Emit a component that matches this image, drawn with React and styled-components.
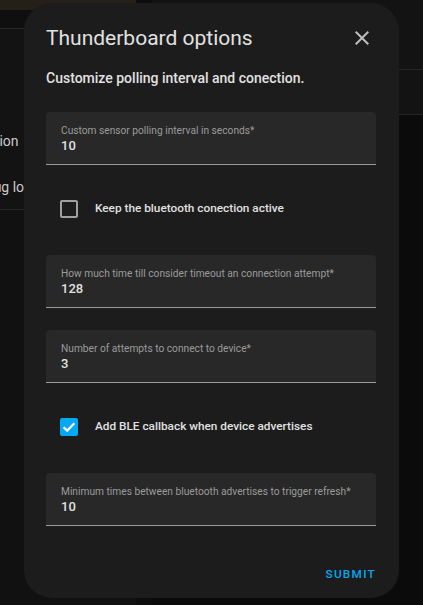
import React, { useState } from "react";
import styled, { createGlobalStyle } from "styled-components";

const GlobalStyle = createGlobalStyle`
  html, body {
    margin: 0;
    padding: 0;
    background: #0b0b0b;
    font-family: Roboto, "Noto Sans", sans-serif;
    -webkit-font-smoothing: antialiased;
  }
  #root {
    width: 423px;
    height: 605px;
    overflow: hidden;
    position: relative;
  }
`;

const fields = [
  { key: "interval", label: "Custom sensor polling interval in seconds*", value: "10" },
  { key: "keep", check: true, label: "Keep the bluetooth conection active" },
  { key: "timeout", label: "How much time till consider timeout an connection attempt*", value: "128" },
  { key: "attempts", label: "Number of attempts to connect to device*", value: "3" },
  { key: "ble", check: true, label: "Add BLE callback when device advertises" },
  { key: "refresh", label: "Minimum times between bluetooth advertises to trigger refresh*", value: "10" },
];

export default function App() {
  const [checks, setChecks] = useState({ keep: false, ble: true });

  return (
    <>
      <GlobalStyle />
      <Page>
        <LeftPane>
          <TopStrip />
          <LeftHeader />
          <MenuList>
            <MenuItem $shift={77}>Documentation</MenuItem>
            <MenuItem $shift={75}>Enable debug logging</MenuItem>
          </MenuList>
        </LeftPane>
        <RightPane>
          <PaneRow $h={69} />
          <PaneRow $h={44} />
        </RightPane>
      </Page>

      <Dialog>
        <Header>
          <Title>Thunderboard options</Title>
          <CloseButton aria-label="close">
            <svg width="24" height="24" viewBox="0 0 24 24">
              <path
                d="M19 6.41 17.59 5 12 10.59 6.41 5 5 6.41 10.59 12 5 17.59 6.41 19 12 13.41 17.59 19 19 17.59 13.41 12z"
                fill="#bdbdbd"
              />
            </svg>
          </CloseButton>
        </Header>
        <Content>
          <Description>Customize polling interval and conection.</Description>
          {fields.map((f) =>
            f.check ? (
              <CheckRow key={f.key} onClick={() => setChecks((c) => ({ ...c, [f.key]: !c[f.key] }))}>
                <CheckBox $checked={checks[f.key]}>
                  {checks[f.key] && (
                    <svg width="18" height="18" viewBox="0 0 18 18">
                      <path d="M3.6 9.2 7.2 12.6 14.4 5.2" fill="none" stroke="#fff" strokeWidth="2.2" />
                    </svg>
                  )}
                </CheckBox>
                <CheckLabel>{f.label}</CheckLabel>
              </CheckRow>
            ) : (
              <TextField key={f.key}>
                <FieldLabel>{f.label}</FieldLabel>
                <FieldValue>{f.value}</FieldValue>
              </TextField>
            )
          )}
        </Content>
        <Footer>
          <SubmitButton>Submit</SubmitButton>
        </Footer>
      </Dialog>
    </>
  );
}

// Background page (dimmed behind the dialog)
const Page = styled.div`
  display: flex;
  width: 423px;
  height: 605px;
  background: #0b0b0b;
`;

const LeftPane = styled.div`
  width: 136px;
  display: flex;
  flex-direction: column;
  background: #111;
`;

const TopStrip = styled.div`
  height: 10px;
  background: #241f17;
`;

const LeftHeader = styled.div`
  height: 18px;
  background: #0f0f0f;
  border-bottom: 1px solid #262626;
`;

const MenuList = styled.div`
  height: 181px;
  background: #131313;
  border-bottom: 1px solid #262626;
  display: flex;
  flex-direction: column;
  padding-top: 102px;
  box-sizing: border-box;
  gap: 26px;
`;

const MenuItem = styled.div`
  margin-left: -${(p) => p.$shift}px;
  font-size: 14px;
  line-height: 20px;
  color: #c9c9c9;
  white-space: nowrap;
`;

const RightPane = styled.div`
  flex: 1;
  display: flex;
  flex-direction: column;
  border-left: 16px solid #0d0d0d;
`;

const PaneRow = styled.div`
  height: ${(p) => p.$h}px;
  background: #131313;
  border-bottom: 1px solid #262626;
`;

// Dialog
const Dialog = styled.div`
  position: absolute;
  left: 24px;
  top: 3px;
  width: 375px;
  height: 595px;
  box-sizing: border-box;
  background: #1c1c1c;
  border-radius: 28px;
  display: flex;
  flex-direction: column;
  color: #e1e1e1;
`;

const Header = styled.div`
  display: flex;
  align-items: center;
  justify-content: space-between;
  padding: 21px 25px 0 22px;
  height: 28px;
  box-sizing: content-box;
`;

const Title = styled.h2`
  margin: 0;
  font-size: 21px;
  line-height: 28px;
  font-weight: 400;
  color: #e1e1e1;
`;

const CloseButton = styled.button`
  width: 24px;
  height: 24px;
  padding: 0;
  border: none;
  background: none;
  display: flex;
  cursor: pointer;
`;

const Content = styled.div`
  padding: 16px 23px 0 22px;
  display: flex;
  flex-direction: column;
`;

const Description = styled.p`
  margin: 0 0 24px;
  font-size: 14px;
  line-height: 20px;
  font-weight: 500;
  color: #e1e1e1;
`;

const TextField = styled.div`
  height: 53px;
  box-sizing: border-box;
  background: #282828;
  border-radius: 4px 4px 0 0;
  border-bottom: 1px solid #9a9a9a;
  padding: 12px 15px 0;
  margin-bottom: 22px;
  display: flex;
  flex-direction: column;
`;

const FieldLabel = styled.span`
  font-size: 10.2px;
  line-height: 13px;
  color: #9b9b9b;
  white-space: nowrap;
`;

const FieldValue = styled.span`
  margin-top: 0;
  font-size: 13px;
  line-height: 18px;
  font-weight: 500;
  color: #e1e1e1;
`;

const CheckRow = styled.div`
  height: 43px;
  margin-bottom: 25px;
  display: flex;
  align-items: center;
  padding-left: 14px;
  cursor: pointer;
`;

const CheckBox = styled.div`
  width: 18px;
  height: 18px;
  box-sizing: border-box;
  border-radius: 2px;
  border: ${(p) => (p.$checked ? "none" : "2px solid #a0a0a0")};
  background: ${(p) => (p.$checked ? "#03a9f4" : "transparent")};
  display: flex;
`;

const CheckLabel = styled.span`
  margin-left: 17px;
  margin-top: -2px;
  font-size: 11.8px;
  line-height: 18px;
  font-weight: 500;
  color: #e1e1e1;
`;

const Footer = styled.div`
  margin-top: auto;
  display: flex;
  justify-content: flex-end;
  padding: 0 15px 6px 0;
`;

const SubmitButton = styled.button`
  height: 36px;
  padding: 0 8px;
  border: none;
  background: none;
  font-family: Roboto, sans-serif;
  font-size: 11.8px;
  font-weight: 500;
  letter-spacing: 1.25px;
  text-transform: uppercase;
  color: #03a9f4;
  cursor: pointer;
`;
